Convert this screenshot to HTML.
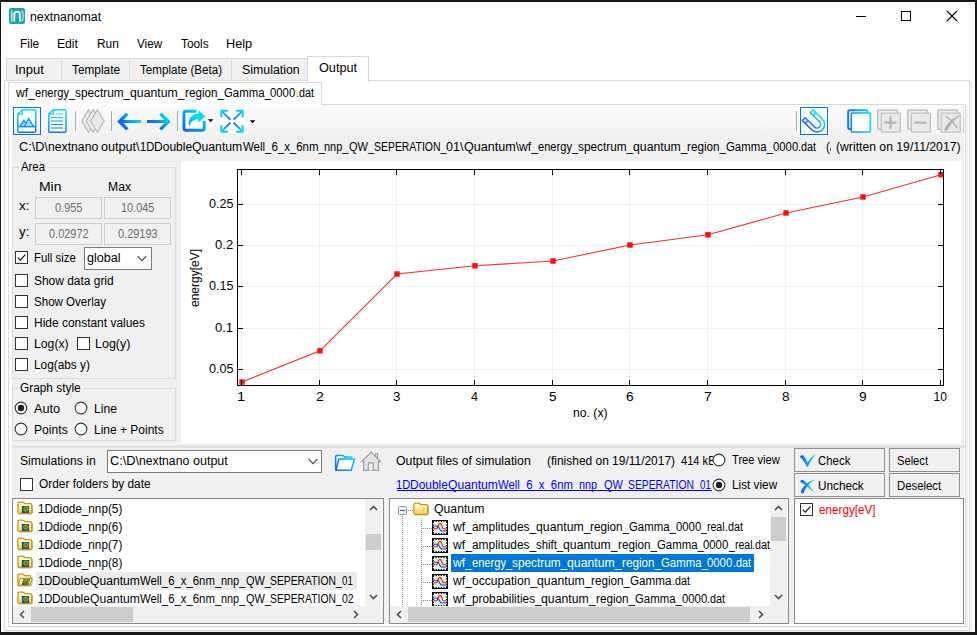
<!DOCTYPE html>
<html><head><meta charset="utf-8"><title>nextnanomat</title>
<style>
html,body{margin:0;padding:0;}
body{width:977px;height:635px;background:#191919;position:relative;overflow:hidden;font-family:"Liberation Sans",sans-serif;}
div,svg,span.t{position:absolute;}
svg{overflow:visible;}
span.t{white-space:pre;transform-origin:0 50%;display:block;}
span.t i{font-style:normal;color:transparent;}
span.t b{font-weight:normal;display:inline-block;transform-origin:0 50%;white-space:pre;}
</style></head><body>
<div style="left:1px;top:2px;width:974px;height:630px;background:#fff;"></div>
<svg style="left:9px;top:8px;" width="16" height="16" viewBox="0 0 16 16"><rect x="0" y="0" width="16" height="16" rx="2.2" fill="#17a5b0"/>
<path d="M2.7 2.4V13.6" stroke="#c8ecef" stroke-width="1.5" fill="none"/>
<path d="M5.3 13.6V6.6C5.3 4.4 6.6 3.6 8 3.6C9.6 3.6 10.9 4.4 10.9 6.8V13.6" stroke="#fff" stroke-width="1.9" fill="none"/>
<path d="M13 2.6C14.4 5.5 14.4 10.5 13 13.4" stroke="#c8ecef" stroke-width="1.4" fill="none"/></svg>
<span class="t " style="left:29.80px;top:8.84px;font-size:12px;line-height:16px;color:#000;transform:scaleX(1.0245);">nextnanomat</span>
<svg style="left:850px;top:5px;" width="115" height="22" viewBox="0 0 115 22"><path d="M6 11.5H16" stroke="#000" stroke-width="1"/>
<rect x="51.5" y="6.5" width="9" height="9" fill="none" stroke="#000" stroke-width="1"/>
<path d="M97 6L107 16M107 6L97 16" stroke="#000" stroke-width="1.1"/></svg>
<span class="t " style="left:20.44px;top:35.84px;font-size:12px;line-height:16px;color:#000;transform:scaleX(0.9955);">File</span>
<span class="t " style="left:57.43px;top:35.84px;font-size:12px;line-height:16px;color:#000;transform:scaleX(1.0092);">Edit</span>
<span class="t " style="left:96.65px;top:35.84px;font-size:12px;line-height:16px;color:#000;transform:scaleX(0.9931);">Run</span>
<span class="t " style="left:137.14px;top:35.84px;font-size:12px;line-height:16px;color:#000;transform:scaleX(0.9713);">View</span>
<span class="t " style="left:180.76px;top:35.84px;font-size:12px;line-height:16px;color:#000;transform:scaleX(0.9868);">Tools</span>
<span class="t " style="left:226.38px;top:35.84px;font-size:12px;line-height:16px;color:#000;transform:scaleX(1.0594);">Help</span>
<div style="left:4px;top:80px;width:966px;height:551px;background:#fff;border:1px solid #d9d9d9;box-sizing:border-box;"></div>
<div style="left:970px;top:81px;width:2px;height:551px;background:#f1f1f1;"></div>
<div style="left:5px;top:631px;width:967px;height:1px;background:#f1f1f1;"></div>
<div style="left:6px;top:58px;width:56px;height:23px;background:#f0f0f0;border:1px solid #d9d9d9;box-sizing:border-box;"></div>
<span class="t " style="left:15.23px;top:61.84px;font-size:12px;line-height:16px;color:#000;transform:scaleX(1.0824);">Input</span>
<div style="left:61px;top:58px;width:69px;height:23px;background:#f0f0f0;border:1px solid #d9d9d9;box-sizing:border-box;"></div>
<span class="t " style="left:72.46px;top:61.84px;font-size:12px;line-height:16px;color:#000;transform:scaleX(0.9866);">Template</span>
<div style="left:129px;top:58px;width:103px;height:23px;background:#f0f0f0;border:1px solid #d9d9d9;box-sizing:border-box;"></div>
<span class="t " style="left:140.47px;top:61.84px;font-size:12px;line-height:16px;color:#000;transform:scaleX(0.9689);">Template (Beta)</span>
<div style="left:231px;top:58px;width:77px;height:23px;background:#f0f0f0;border:1px solid #d9d9d9;box-sizing:border-box;"></div>
<span class="t " style="left:241.64px;top:61.84px;font-size:12px;line-height:16px;color:#000;transform:scaleX(1.0296);">Simulation</span>
<div style="left:307px;top:56px;width:62px;height:26px;background:#fff;border:1px solid #d9d9d9;box-sizing:border-box;border-bottom:none;"></div>
<span class="t " style="left:319.03px;top:59.84px;font-size:12px;line-height:16px;color:#000;transform:scaleX(1.0565);">Output</span>
<div style="left:8px;top:104px;width:958px;height:523px;background:#fff;border:1px solid #d9d9d9;box-sizing:border-box;"></div>
<div style="left:966px;top:105px;width:2px;height:523px;background:#f1f1f1;"></div>
<div style="left:9px;top:627px;width:959px;height:1px;background:#f1f1f1;"></div>
<div style="left:8px;top:82px;width:314px;height:24px;background:#fff;border:1px solid #d9d9d9;box-sizing:border-box;border-bottom:none;"></div>
<span class="t" style="left:16.00px;top:84.84px;font-size:12px;line-height:16px;color:#000;"><b style="width:18.90px;transform:scaleX(1.0121)">wf_</b><b style="width:40.10px;transform:scaleX(0.9248)">energy_</b><b style="width:55.10px;transform:scaleX(0.9836)">spectrum_</b><b style="width:54.50px;transform:scaleX(1.0212)">quantum_</b><b style="width:39.00px;transform:scaleX(0.9743)">region_</b><b style="width:46.80px;transform:scaleX(0.9484)">Gamma_</b><b style="width:25.20px;transform:scaleX(0.9441)">0000</b><b style="width:18.00px;transform:scaleX(0.8994)">.dat</b></span>
<div style="left:12px;top:105px;width:952px;height:519px;background:#f0f0f0;"></div>
<div style="left:12px;top:105px;width:952px;height:33px;background:linear-gradient(#fdfdfd,#fafafa 6%,#f6f6f6 50%,#f0f0f0);"></div>
<div style="left:13px;top:107px;width:28px;height:28px;background:#fbfaf9;border:1px solid #0078d7;box-sizing:border-box;"></div>
<div style="left:800px;top:107px;width:28px;height:28px;background:#fbfaf9;border:1px solid #0078d7;box-sizing:border-box;"></div>
<div style="left:75px;top:111px;width:1px;height:20px;background:#a9a9a9;"></div>
<div style="left:76px;top:111px;width:1px;height:20px;background:#fbfbfb;"></div>
<div style="left:111px;top:111px;width:1px;height:20px;background:#a9a9a9;"></div>
<div style="left:112px;top:111px;width:1px;height:20px;background:#fbfbfb;"></div>
<div style="left:177px;top:111px;width:1px;height:20px;background:#a9a9a9;"></div>
<div style="left:178px;top:111px;width:1px;height:20px;background:#fbfbfb;"></div>
<div style="left:796px;top:111px;width:1px;height:20px;background:#a9a9a9;"></div>
<div style="left:797px;top:111px;width:1px;height:20px;background:#fbfbfb;"></div>
<svg style="left:12px;top:105px;" width="953" height="33" viewBox="0 0 953 33"><defs><linearGradient id="gv" gradientUnits="userSpaceOnUse" x1="0" y1="109" x2="0" y2="133"><stop offset="0" stop-color="#00e4f6"/><stop offset="1" stop-color="#0a6cff"/></linearGradient>
<linearGradient id="gd" x1="0" y1="1" x2="1" y2="0"><stop offset="0" stop-color="#0a5cff"/><stop offset="1" stop-color="#00e0f2"/></linearGradient>
<linearGradient id="gh" x1="0" y1="0" x2="1" y2="0"><stop offset="0" stop-color="#1a78ff"/><stop offset="1" stop-color="#00e4f6"/></linearGradient>
<radialGradient id="gr" cx="0.5" cy="0.5" r="0.7"><stop offset="0" stop-color="#0a6cff"/><stop offset="0.55" stop-color="#1a9cf8"/><stop offset="1" stop-color="#00e0f2"/></radialGradient>
</defs>
<g fill="none" stroke="url(#gv)" stroke-width="1.4" stroke-linejoin="round" transform="translate(-12,-105)">
  <!-- image file icon -->
  <path d="M22.2 109.8H34.6Q35.8 109.8 35.8 111V131Q35.8 132.2 34.6 132.2H19Q17.8 132.2 17.8 131V114.2Z" fill="#fff"/>
  <path d="M22.2 109.8V114.2H17.8" stroke-width="1.2"/>
  <path d="M18.2 126.6H35.4" stroke-width="1.6"/>
  <path d="M20 126.4L23.9 120.6L26.4 124.2M24.4 126.4L28.7 118.8L33.4 126.4" stroke-width="1.7" stroke-linejoin="miter"/>
  <path d="M23.9 123.2L22.6 125.4M28.8 122.4L27.2 125.4M28.8 122.4L30.4 125.4" stroke-width="0.9" opacity="0.8"/>
  <!-- text file icon -->
  <path d="M53.2 109.8H64.8Q66 109.8 66 111V131Q66 132.2 64.8 132.2H50Q48.8 132.2 48.8 131V114.2Z" fill="#fff"/>
  <path d="M53.2 109.8V114.2H48.8" stroke-width="1.2"/>
  <path d="M56 114H63" stroke-width="1.6" opacity="0.55"/>
  <path d="M51 117.6H63" stroke-width="1"/>
  <path d="M51 121H63" stroke-width="1.8" opacity="0.6"/>
  <path d="M51 124.5H63" stroke-width="1"/>
  <path d="M51 128H63" stroke-width="1.8" opacity="0.6"/>
</g>
<g transform="translate(-12,-105)" stroke="#b2b2b2" stroke-width="1.1" fill="#e9e9e9" stroke-linejoin="miter">
  <path d="M88.5 109.8L95.3 121L88.5 132.3L81.8 121Z" fill="#ececec"/>
  <path d="M93 109.8L99.8 121L93 132.3L86.2 121Z" fill="#ececec"/>
  <path d="M97.4 109.8L104.2 121L97.4 132.3L90.6 121Z"/>
</g>
<g transform="translate(-12,-105)" fill="none" stroke-width="3.2" stroke-linecap="butt" stroke-linejoin="miter">
  <path d="M141 121.5H119.5M127.4 113.6L119.4 121.5L127.4 129.4" stroke="url(#ga1)"/>
  <path d="M147 121.5H168.5M160.4 113.6L168.4 121.5L160.4 129.4" stroke="url(#ga2)"/>
</g>
<defs>
<linearGradient id="ga1" gradientUnits="userSpaceOnUse" x1="118" y1="129" x2="139" y2="113"><stop offset="0" stop-color="#0a48ff"/><stop offset="0.35" stop-color="#0a78fc"/><stop offset="0.7" stop-color="#00c4f4"/><stop offset="1" stop-color="#00e6f4"/></linearGradient>
<linearGradient id="ga2" gradientUnits="userSpaceOnUse" x1="150" y1="132" x2="168" y2="112"><stop offset="0" stop-color="#0a48ff"/><stop offset="0.4" stop-color="#0a78fc"/><stop offset="0.75" stop-color="#00c4f4"/><stop offset="1" stop-color="#00e6f4"/></linearGradient>
<linearGradient id="ge" gradientUnits="userSpaceOnUse" x1="184" y1="132" x2="200" y2="110"><stop offset="0" stop-color="#0a5cff"/><stop offset="1" stop-color="#00dcf2"/></linearGradient>
<linearGradient id="gsw" gradientUnits="userSpaceOnUse" x1="188" y1="128" x2="204" y2="112"><stop offset="0" stop-color="#1a78ff"/><stop offset="0.5" stop-color="#00d8f0"/><stop offset="1" stop-color="#00e6f4"/></linearGradient>
<radialGradient id="gfs" gradientUnits="userSpaceOnUse" cx="232" cy="121" r="15"><stop offset="0" stop-color="#0a6cff"/><stop offset="0.6" stop-color="#1aa4f6"/><stop offset="1" stop-color="#00dcf2"/></radialGradient>
<linearGradient id="gm" gradientUnits="userSpaceOnUse" x1="804" y1="132" x2="826" y2="110"><stop offset="0" stop-color="#0a50ff"/><stop offset="1" stop-color="#00e6f4"/></linearGradient>
<linearGradient id="gc" gradientUnits="userSpaceOnUse" x1="847" y1="0" x2="871" y2="0"><stop offset="0" stop-color="#1a70ff"/><stop offset="1" stop-color="#00e6f4"/></linearGradient>
</defs>
<g transform="translate(-12,-105)">
  <!-- export -->
  <rect x="185" y="112.3" width="18.2" height="17" fill="#fdfdfd"/>
  <path d="M196.5 111.3H186Q184 111.3 184 113.3V128.3Q184 130.3 186 130.3H202.2Q204.2 130.3 204.2 128.3V121" fill="none" stroke="url(#ge)" stroke-width="2.9"/>
  <path d="M198.4 110.2L205.4 116.4L198.4 122.6V119.6C193.5 119.4 190.3 121.6 189.2 127C187.2 119.5 191.5 113.6 198.4 113.4Z" fill="url(#gsw)"/>
  <path d="M207.8 119.3H213.4L210.6 122.3Z" fill="#000"/>
  <!-- fullscreen -->
  <rect x="220" y="109.5" width="24" height="23.3" fill="#fff"/>
  <g fill="none" stroke="url(#gfs)" stroke-width="1.9">
    <path d="M221.3 117.2V110.7H227.8M236.2 110.7H242.7V117.2M242.7 125.2V131.7H236.2M227.8 131.7H221.3V125.2"/>
    <path d="M221.6 111L230.4 119.6M242.4 111L233.6 119.6M242.4 131.4L233.6 122.8M221.6 131.4L230.4 122.8"/>
  </g>
  <path d="M249.8 120.3H255.4L252.6 123.3Z" fill="#000"/>
  <!-- magnet -->
  <g transform="translate(817,124.4) rotate(-45)" fill="none" stroke="url(#gmL)" stroke-width="1.4" stroke-linejoin="round">
    <path d="M-7.6 -13V0A7.6 7.6 0 0 0 7.6 0V-13H3.6V0A3.6 3.6 0 0 1 -3.6 0V-13Z"/>
    <path d="M-7.6 -9.2H-3.6M3.6 -9.2H7.6"/>
  </g>
  <!-- copy -->
  <rect x="848.2" y="110.2" width="19" height="18.8" rx="1" fill="none" stroke="url(#gc)" stroke-width="2"/>
  <rect x="851.3" y="113" width="19" height="19" rx="0.8" fill="#fff" stroke="url(#gc)" stroke-width="1.6"/>
</g>
<defs><linearGradient id="gmL" gradientUnits="userSpaceOnUse" x1="-8" y1="0" x2="8" y2="0"><stop offset="0" stop-color="#0a58ff"/><stop offset="1" stop-color="#00e0f4"/></linearGradient></defs>
<g transform="translate(-12,-105)" stroke="#c2c2c2" stroke-width="1.3" fill="#ececec">
  <rect x="877.7" y="110" width="19.5" height="19.3" rx="0.8" stroke-width="1.6"/>
  <rect x="881.3" y="113.2" width="19" height="19" rx="0.8" fill="#e9e9e9"/>
  <rect x="907.9" y="110" width="19.5" height="19.3" rx="0.8" stroke-width="1.6"/>
  <rect x="911.3" y="113.2" width="19" height="19" rx="0.8" fill="#e9e9e9"/>
  <rect x="937.8" y="110" width="19.5" height="19.3" rx="0.8" stroke-width="1.6"/>
  <rect x="941.2" y="113.2" width="19" height="19" rx="0.8" fill="#e9e9e9"/>
  <path d="M884.4 122.6H896.6M890.5 116.5V128.7" stroke="#b6b6b6" stroke-width="2.2" fill="none"/>
  <path d="M914.5 122.6H926.6" stroke="#b6b6b6" stroke-width="2.2" fill="none"/>
  <path d="M945.8 116.4C950 118.6 954 123 957.4 128.4" stroke="#b4b4b4" stroke-width="1.6" fill="none"/>
  <path d="M959.4 115.8C952 119.2 947 123.6 944.8 129.4C944.6 130.6 946.8 130.8 947.4 129.6C949.6 124.6 953.2 120 959.4 115.8Z" fill="#b0b0b0" stroke="#b0b0b0" stroke-width="1"/>
</g>
</svg>
<div style="left:963px;top:107px;width:1px;height:26px;background:linear-gradient(#e6e6e6,#d0d0d0 40%,#c2c2c2);"></div>
<div style="left:961px;top:106px;width:3px;height:1px;background:#e4e4e4;"></div>
<span class="t" style="left:18.97px;top:138.84px;font-size:12px;line-height:16px;color:#000;"><b style="width:28.80px;transform:scaleX(1.0536)">C:\D\</b><b style="width:53.60px;transform:scaleX(1.0170)">nextnano </b><b style="width:38.50px;transform:scaleX(1.0492)">output\</b><b style="width:14.31px;transform:scaleX(0.9331)">1D</b><b style="width:38.20px;transform:scaleX(1.0047)">Double</b><b style="width:50.30px;transform:scaleX(1.0191)">Quantum</b><b style="width:81.85px;transform:scaleX(0.9537)">Well_6_x_6nm_</b><b style="width:24.39px;transform:scaleX(0.9139)">nnp_</b><b style="width:25.10px;transform:scaleX(0.9182)">QW_</b><b style="width:72.27px;transform:scaleX(0.8694)">SEPERATION_</b><b style="width:17.37px;transform:scaleX(1.0412)">01\</b><b style="width:55.20px;transform:scaleX(1.0476)">Quantum\</b><b style="width:18.90px;transform:scaleX(1.0121)">wf_</b><b style="width:40.10px;transform:scaleX(0.9248)">energy_</b><b style="width:55.10px;transform:scaleX(0.9836)">spectrum_</b><b style="width:54.50px;transform:scaleX(1.0212)">quantum_</b><b style="width:39.00px;transform:scaleX(0.9743)">region_</b><b style="width:46.80px;transform:scaleX(0.9484)">Gamma_</b><b style="width:25.20px;transform:scaleX(0.9441)">0000</b><b style="width:18.00px;transform:scaleX(0.8994)">.dat</b></span>
<span class="t " style="left:825.82px;top:138.84px;font-size:12px;line-height:16px;color:#000;transform:scaleX(0.9434);">(</span>
<div style="left:830px;top:148px;width:1px;height:3px;background:#666;"></div>
<span class="t " style="left:836.27px;top:138.84px;font-size:12px;line-height:16px;color:#000;transform:scaleX(1.0164);">(written on 19/11/2017)</span>
<div style="left:12px;top:167px;width:164px;height:212px;border:1px solid #dcdcdc;box-sizing:border-box;"></div>
<div style="left:19px;top:166px;width:28px;height:3px;background:#f0f0f0;"></div>
<span class="t " style="left:21.00px;top:158.84px;font-size:12px;line-height:16px;color:#000;transform:scaleX(0.9479);">Area</span>
<span class="t " style="left:38.58px;top:178.84px;font-size:12px;line-height:16px;color:#000;transform:scaleX(1.1621);">Min</span>
<span class="t " style="left:107.73px;top:178.84px;font-size:12px;line-height:16px;color:#000;transform:scaleX(1.0139);">Max</span>
<span class="t " style="left:18.66px;top:197.84px;font-size:12px;line-height:16px;color:#000;transform:scaleX(1.1275);">x:</span>
<span class="t " style="left:18.80px;top:223.84px;font-size:12px;line-height:16px;color:#000;transform:scaleX(1.1111);">y:</span>
<div style="left:35px;top:197px;width:67px;height:22px;background:#f0f0f0;border:1px solid #cfcfcf;box-sizing:border-box;"></div>
<span class="t " style="left:55.06px;top:199.84px;font-size:12px;line-height:16px;color:#6d6d6d;transform:scaleX(0.9125);">0.955</span>
<div style="left:104px;top:197px;width:67px;height:22px;background:#f0f0f0;border:1px solid #cfcfcf;box-sizing:border-box;"></div>
<span class="t " style="left:121.18px;top:199.84px;font-size:12px;line-height:16px;color:#6d6d6d;transform:scaleX(0.9111);">10.045</span>
<div style="left:35px;top:223px;width:67px;height:22px;background:#f0f0f0;border:1px solid #cfcfcf;box-sizing:border-box;"></div>
<span class="t " style="left:48.86px;top:225.84px;font-size:12px;line-height:16px;color:#6d6d6d;transform:scaleX(0.9149);">0.02972</span>
<div style="left:104px;top:223px;width:67px;height:22px;background:#f0f0f0;border:1px solid #cfcfcf;box-sizing:border-box;"></div>
<span class="t " style="left:117.76px;top:225.84px;font-size:12px;line-height:16px;color:#6d6d6d;transform:scaleX(0.9147);">0.29193</span>
<div style="left:15px;top:251px;width:13px;height:13px;background:#fff;border:1px solid #333;box-sizing:border-box;"></div>
<svg style="left:15px;top:251px;" width="13" height="13" viewBox="0 0 13 13"><path d="M2.8 6.6L5.3 9.2L10.3 3.6" fill="none" stroke="#111" stroke-width="1.15"/></svg>
<span class="t " style="left:33.69px;top:249.84px;font-size:12px;line-height:16px;color:#000;transform:scaleX(0.9497);">Full size</span>
<div style="left:84px;top:247px;width:68px;height:23px;background:#fff;border:1px solid #7a7a7a;box-sizing:border-box;"></div>
<span class="t " style="left:87.00px;top:249.84px;font-size:12px;line-height:16px;color:#000;transform:scaleX(1.0514);">global</span>
<svg style="left:136px;top:255px;" width="12" height="8" viewBox="0 0 12 8"><path d="M1.7 1.2L6 5.7L10.3 1.2" fill="none" stroke="#444" stroke-width="1.1"/></svg>
<div style="left:15px;top:274px;width:13px;height:13px;background:#fff;border:1px solid #333;box-sizing:border-box;"></div>
<span class="t " style="left:34.06px;top:272.84px;font-size:12px;line-height:16px;color:#000;transform:scaleX(0.9952);">Show data grid</span>
<div style="left:15px;top:295px;width:13px;height:13px;background:#fff;border:1px solid #333;box-sizing:border-box;"></div>
<span class="t " style="left:34.08px;top:293.84px;font-size:12px;line-height:16px;color:#000;transform:scaleX(0.9628);">Show Overlay</span>
<div style="left:15px;top:316px;width:13px;height:13px;background:#fff;border:1px solid #333;box-sizing:border-box;"></div>
<span class="t " style="left:33.64px;top:314.84px;font-size:12px;line-height:16px;color:#000;transform:scaleX(0.9960);">Hide constant values</span>
<div style="left:15px;top:337px;width:13px;height:13px;background:#fff;border:1px solid #333;box-sizing:border-box;"></div>
<span class="t " style="left:33.62px;top:335.84px;font-size:12px;line-height:16px;color:#000;transform:scaleX(1.0192);">Log(x)</span>
<div style="left:77px;top:337px;width:13px;height:13px;background:#fff;border:1px solid #333;box-sizing:border-box;"></div>
<span class="t " style="left:95.40px;top:335.84px;font-size:12px;line-height:16px;color:#000;transform:scaleX(1.0409);">Log(y)</span>
<div style="left:15px;top:358px;width:13px;height:13px;background:#fff;border:1px solid #333;box-sizing:border-box;"></div>
<span class="t " style="left:33.65px;top:356.84px;font-size:12px;line-height:16px;color:#000;transform:scaleX(0.9862);">Log(abs y)</span>
<div style="left:12px;top:388px;width:164px;height:53px;border:1px solid #dcdcdc;box-sizing:border-box;"></div>
<div style="left:19px;top:387px;width:64px;height:3px;background:#f0f0f0;"></div>
<span class="t " style="left:20.41px;top:379.84px;font-size:12px;line-height:16px;color:#000;transform:scaleX(0.9877);">Graph style</span>
<svg style="left:14.0px;top:401.1px;" width="14" height="14" viewBox="0 0 14 14"><circle cx="7" cy="7" r="5.85" fill="#fff" stroke="#333" stroke-width="1.1"/><circle cx="7" cy="7" r="3.2" fill="#222"/></svg>
<span class="t " style="left:34.40px;top:400.84px;font-size:12px;line-height:16px;color:#000;transform:scaleX(1.0587);">Auto</span>
<svg style="left:74.0px;top:401.1px;" width="14" height="14" viewBox="0 0 14 14"><circle cx="7" cy="7" r="5.85" fill="#fff" stroke="#333" stroke-width="1.1"/></svg>
<span class="t " style="left:93.73px;top:400.84px;font-size:12px;line-height:16px;color:#000;transform:scaleX(1.0122);">Line</span>
<svg style="left:14.0px;top:422.1px;" width="14" height="14" viewBox="0 0 14 14"><circle cx="7" cy="7" r="5.85" fill="#fff" stroke="#333" stroke-width="1.1"/></svg>
<span class="t " style="left:33.73px;top:421.84px;font-size:12px;line-height:16px;color:#000;transform:scaleX(1.0100);">Points</span>
<svg style="left:74.0px;top:422.1px;" width="14" height="14" viewBox="0 0 14 14"><circle cx="7" cy="7" r="5.85" fill="#fff" stroke="#333" stroke-width="1.1"/></svg>
<span class="t " style="left:93.74px;top:421.84px;font-size:12px;line-height:16px;color:#000;transform:scaleX(0.9994);">Line + Points</span>
<div style="left:181px;top:161px;width:780px;height:282px;background:#fff;"></div>
<svg style="left:181px;top:161px;" width="780" height="282" viewBox="0 0 780 282"><path d="M60.5 9V224" stroke="#e9f3fc" stroke-width="1"/><path d="M138.5 9V224" stroke="#e9f3fc" stroke-width="1"/><path d="M215.5 9V224" stroke="#e9f3fc" stroke-width="1"/><path d="M293.5 9V224" stroke="#e9f3fc" stroke-width="1"/><path d="M371.5 9V224" stroke="#e9f3fc" stroke-width="1"/><path d="M448.5 9V224" stroke="#e9f3fc" stroke-width="1"/><path d="M526.5 9V224" stroke="#e9f3fc" stroke-width="1"/><path d="M604.5 9V224" stroke="#e9f3fc" stroke-width="1"/><path d="M681.5 9V224" stroke="#e9f3fc" stroke-width="1"/><path d="M759.5 9V224" stroke="#e9f3fc" stroke-width="1"/><path d="M57 43.5H762" stroke="#e9f3fc" stroke-width="1"/><path d="M57 84.5H762" stroke="#e9f3fc" stroke-width="1"/><path d="M57 125.5H762" stroke="#e9f3fc" stroke-width="1"/><path d="M57 167.5H762" stroke="#e9f3fc" stroke-width="1"/><path d="M57 208.5H762" stroke="#e9f3fc" stroke-width="1"/><polyline points="61.0,221.0 139.0,189.8 216.0,113.0 294.0,104.8 372.0,100.0 449.0,84.0 527.0,73.8 605.0,52.0 682.0,36.0 760.0,13.7" fill="none" stroke="#ff2a2a" stroke-width="1.1"/><rect x="58.3" y="218.3" width="5.4" height="5.4" fill="#ff0d0d"/><rect x="136.3" y="187.1" width="5.4" height="5.4" fill="#ff0d0d"/><rect x="213.3" y="110.3" width="5.4" height="5.4" fill="#ff0d0d"/><rect x="291.3" y="102.1" width="5.4" height="5.4" fill="#ff0d0d"/><rect x="369.3" y="97.3" width="5.4" height="5.4" fill="#ff0d0d"/><rect x="446.3" y="81.3" width="5.4" height="5.4" fill="#ff0d0d"/><rect x="524.3" y="71.1" width="5.4" height="5.4" fill="#ff0d0d"/><rect x="602.3" y="49.3" width="5.4" height="5.4" fill="#ff0d0d"/><rect x="679.3" y="33.3" width="5.4" height="5.4" fill="#ff0d0d"/><rect x="757.3" y="11.0" width="5.4" height="5.4" fill="#ff0d0d"/><rect x="56.5" y="8.5" width="706" height="216" fill="none" stroke="#000" stroke-width="1"/><path d="M60.5 9V14M60.5 224V219" stroke="#000" stroke-width="1"/><path d="M138.5 9V14M138.5 224V219" stroke="#000" stroke-width="1"/><path d="M215.5 9V14M215.5 224V219" stroke="#000" stroke-width="1"/><path d="M293.5 9V14M293.5 224V219" stroke="#000" stroke-width="1"/><path d="M371.5 9V14M371.5 224V219" stroke="#000" stroke-width="1"/><path d="M448.5 9V14M448.5 224V219" stroke="#000" stroke-width="1"/><path d="M526.5 9V14M526.5 224V219" stroke="#000" stroke-width="1"/><path d="M604.5 9V14M604.5 224V219" stroke="#000" stroke-width="1"/><path d="M681.5 9V14M681.5 224V219" stroke="#000" stroke-width="1"/><path d="M759.5 9V14M759.5 224V219" stroke="#000" stroke-width="1"/><path d="M57 43.5H62M762 43.5H757" stroke="#000" stroke-width="1"/><path d="M57 84.5H62M762 84.5H757" stroke="#000" stroke-width="1"/><path d="M57 125.5H62M762 125.5H757" stroke="#000" stroke-width="1"/><path d="M57 167.5H62M762 167.5H757" stroke="#000" stroke-width="1"/><path d="M57 208.5H62M762 208.5H757" stroke="#000" stroke-width="1"/></svg>
<span class="t " style="left:208.50px;top:196.44px;font-size:12px;line-height:16px;color:#000;transform:scaleX(1.0500);">0.25</span>
<span class="t " style="left:214.98px;top:237.44px;font-size:12px;line-height:16px;color:#000;transform:scaleX(1.0897);">0.2</span>
<span class="t " style="left:208.50px;top:278.44px;font-size:12px;line-height:16px;color:#000;transform:scaleX(1.0500);">0.15</span>
<span class="t " style="left:214.98px;top:320.44px;font-size:12px;line-height:16px;color:#000;transform:scaleX(1.0856);">0.1</span>
<span class="t " style="left:208.50px;top:361.44px;font-size:12px;line-height:16px;color:#000;transform:scaleX(1.0500);">0.05</span>
<span class="t " style="left:237.20px;top:388.84px;font-size:12px;line-height:16px;color:#000;transform:scaleX(1.2261);">1</span>
<span class="t " style="left:315.60px;top:388.84px;font-size:12px;line-height:16px;color:#000;transform:scaleX(1.1722);">2</span>
<span class="t " style="left:392.83px;top:388.84px;font-size:12px;line-height:16px;color:#000;transform:scaleX(1.1111);">3</span>
<span class="t " style="left:471.05px;top:388.84px;font-size:12px;line-height:16px;color:#000;transform:scaleX(1.0458);">4</span>
<span class="t " style="left:548.76px;top:388.84px;font-size:12px;line-height:16px;color:#000;transform:scaleX(1.1228);">5</span>
<span class="t " style="left:625.61px;top:388.84px;font-size:12px;line-height:16px;color:#000;transform:scaleX(1.1470);">6</span>
<span class="t " style="left:703.60px;top:388.84px;font-size:12px;line-height:16px;color:#000;transform:scaleX(1.1722);">7</span>
<span class="t " style="left:781.76px;top:388.84px;font-size:12px;line-height:16px;color:#000;transform:scaleX(1.1228);">8</span>
<span class="t " style="left:858.68px;top:388.84px;font-size:12px;line-height:16px;color:#000;transform:scaleX(1.1470);">9</span>
<span class="t " style="left:933.60px;top:388.84px;font-size:12px;line-height:16px;color:#000;transform:scaleX(1.0000);">10</span>
<span class="t " style="left:572.61px;top:404.84px;font-size:12px;line-height:16px;color:#000;transform:scaleX(1.0166);">no. (x)</span>
<span class="t" style="left:195px;top:278px;font-size:12px;line-height:16px;transform:translate(-50%,-50%) rotate(-90deg) scaleX(0.9994);transform-origin:50% 50%;">energy[eV]</span>
<div style="left:12px;top:443px;width:953px;height:2px;background:#f5f5f5;"></div>
<div style="left:12px;top:445px;width:953px;height:3px;background:#e4e4e4;"></div>
<span class="t " style="left:19.55px;top:452.84px;font-size:12px;line-height:16px;color:#000;transform:scaleX(1.0131);">Simulations in</span>
<div style="left:107px;top:450px;width:215px;height:23px;background:#fff;border:1px solid #7a7a7a;box-sizing:border-box;"></div>
<svg style="left:307px;top:458px;" width="12" height="8" viewBox="0 0 12 8"><path d="M1.7 1.2L6 5.7L10.3 1.2" fill="none" stroke="#444" stroke-width="1.1"/></svg>
<span class="t" style="left:109.96px;top:452.84px;font-size:12px;line-height:16px;color:#000;"><b style="width:29.10px;transform:scaleX(1.0646)">C:\D\</b><b style="width:53.60px;transform:scaleX(1.0170)">nextnano </b><b style="width:34.76px;transform:scaleX(1.0420)">output</b></span>
<svg style="left:330px;top:448px;" width="56" height="26" viewBox="330 448 56 26"><defs><linearGradient id="gf" gradientUnits="userSpaceOnUse" x1="335" y1="470" x2="355" y2="456"><stop offset="0" stop-color="#0a60ff"/><stop offset="0.5" stop-color="#0a98f8"/><stop offset="1" stop-color="#00e6f4"/></linearGradient></defs>
<path d="M335.7 470V456.4Q335.7 455.5 336.6 455.5H342.8Q343.5 455.5 343.9 456.1L344.5 457.1H350.8Q351.8 457.1 351.8 458.1V459" fill="#fcfcfc" stroke="url(#gf)" stroke-width="1.5" stroke-linejoin="round"/>
<path d="M335.9 470.2L338.9 459H354.6L351.2 470.2Z" fill="#fff" stroke="url(#gf)" stroke-width="1.5" stroke-linejoin="round"/>
<path d="M375.6 456V453.5H377.6V458.2" fill="#e2e2e2" stroke="#a0a0a0" stroke-width="1.1"/>
<path d="M361.8 461.7L371.1 452.2L380.5 461.7H378.5V470.4H363.7V461.7Z" fill="#e5e5e5" stroke="#9c9c9c" stroke-width="1.2" stroke-linejoin="miter"/>
<path d="M368.3 470.4V462.9H373.3V470.4" fill="#ededed" stroke="#9c9c9c" stroke-width="1.2"/></svg>
<div style="left:20px;top:478px;width:13px;height:13px;background:#fff;border:1px solid #333;box-sizing:border-box;"></div>
<span class="t " style="left:38.87px;top:475.84px;font-size:12px;line-height:16px;color:#000;transform:scaleX(0.9900);">Order folders by date</span>
<div style="left:12px;top:498px;width:372px;height:126px;background:#fff;border:1px solid #828790;box-sizing:border-box;"></div>
<div style="left:36px;top:572px;width:321px;height:18px;background:#ebebeb;"></div>
<svg style="left:17px;top:500.4px;" width="16" height="16" viewBox="0 0 16 16"><defs><linearGradient id="fy" x1="0" y1="0" x2="0" y2="1"><stop offset="0" stop-color="#fffad8"/><stop offset="1" stop-color="#fbd860"/></linearGradient>
<radialGradient id="fr" cx="0.55" cy="0.45" r="0.8"><stop offset="0" stop-color="#ff1400"/><stop offset="0.16" stop-color="#e83800"/><stop offset="0.3" stop-color="#a0a000"/><stop offset="0.44" stop-color="#10a030"/><stop offset="0.64" stop-color="#0840c8"/><stop offset="1" stop-color="#0010a0"/></radialGradient></defs>
<path d="M2.2 14.1H13.8Q15.5 14.1 15.5 12.6V5.4" fill="none" stroke="#7a6030" stroke-width="1" opacity="0.45"/>
<path d="M0.9 3.5Q0.9 2 2.3 2H5.5Q6.5 2 7.1 2.8L7.7 3.7H13.3Q14.7 3.7 14.7 5.1V12.2Q14.7 13.4 13.5 13.4H2.1Q0.9 13.4 0.9 12.2Z" fill="url(#fy)" stroke="#cc9510" stroke-width="1.25"/>
<path d="M2 5.3H13.6" stroke="#fffdf0" stroke-width="1" opacity="0.9"/>
<rect x="4.9" y="6" width="7.2" height="6.9" fill="url(#fr)"/></svg>
<span class="t " style="left:38.22px;top:500.84px;font-size:12px;line-height:16px;color:#000;transform:scaleX(0.9796);">1Ddiode_nnp(5)</span>
<svg style="left:17px;top:518.4px;" width="16" height="16" viewBox="0 0 16 16"><defs><linearGradient id="fy" x1="0" y1="0" x2="0" y2="1"><stop offset="0" stop-color="#fffad8"/><stop offset="1" stop-color="#fbd860"/></linearGradient>
<radialGradient id="fr" cx="0.55" cy="0.45" r="0.8"><stop offset="0" stop-color="#ff1400"/><stop offset="0.16" stop-color="#e83800"/><stop offset="0.3" stop-color="#a0a000"/><stop offset="0.44" stop-color="#10a030"/><stop offset="0.64" stop-color="#0840c8"/><stop offset="1" stop-color="#0010a0"/></radialGradient></defs>
<path d="M2.2 14.1H13.8Q15.5 14.1 15.5 12.6V5.4" fill="none" stroke="#7a6030" stroke-width="1" opacity="0.45"/>
<path d="M0.9 3.5Q0.9 2 2.3 2H5.5Q6.5 2 7.1 2.8L7.7 3.7H13.3Q14.7 3.7 14.7 5.1V12.2Q14.7 13.4 13.5 13.4H2.1Q0.9 13.4 0.9 12.2Z" fill="url(#fy)" stroke="#cc9510" stroke-width="1.25"/>
<path d="M2 5.3H13.6" stroke="#fffdf0" stroke-width="1" opacity="0.9"/>
<rect x="4.9" y="6" width="7.2" height="6.9" fill="url(#fr)"/></svg>
<span class="t " style="left:38.22px;top:518.84px;font-size:12px;line-height:16px;color:#000;transform:scaleX(0.9796);">1Ddiode_nnp(6)</span>
<svg style="left:17px;top:536.4px;" width="16" height="16" viewBox="0 0 16 16"><defs><linearGradient id="fy" x1="0" y1="0" x2="0" y2="1"><stop offset="0" stop-color="#fffad8"/><stop offset="1" stop-color="#fbd860"/></linearGradient>
<radialGradient id="fr" cx="0.55" cy="0.45" r="0.8"><stop offset="0" stop-color="#ff1400"/><stop offset="0.16" stop-color="#e83800"/><stop offset="0.3" stop-color="#a0a000"/><stop offset="0.44" stop-color="#10a030"/><stop offset="0.64" stop-color="#0840c8"/><stop offset="1" stop-color="#0010a0"/></radialGradient></defs>
<path d="M2.2 14.1H13.8Q15.5 14.1 15.5 12.6V5.4" fill="none" stroke="#7a6030" stroke-width="1" opacity="0.45"/>
<path d="M0.9 3.5Q0.9 2 2.3 2H5.5Q6.5 2 7.1 2.8L7.7 3.7H13.3Q14.7 3.7 14.7 5.1V12.2Q14.7 13.4 13.5 13.4H2.1Q0.9 13.4 0.9 12.2Z" fill="url(#fy)" stroke="#cc9510" stroke-width="1.25"/>
<path d="M2 5.3H13.6" stroke="#fffdf0" stroke-width="1" opacity="0.9"/>
<rect x="4.9" y="6" width="7.2" height="6.9" fill="url(#fr)"/></svg>
<span class="t " style="left:38.22px;top:536.84px;font-size:12px;line-height:16px;color:#000;transform:scaleX(0.9796);">1Ddiode_nnp(7)</span>
<svg style="left:17px;top:554.4px;" width="16" height="16" viewBox="0 0 16 16"><defs><linearGradient id="fy" x1="0" y1="0" x2="0" y2="1"><stop offset="0" stop-color="#fffad8"/><stop offset="1" stop-color="#fbd860"/></linearGradient>
<radialGradient id="fr" cx="0.55" cy="0.45" r="0.8"><stop offset="0" stop-color="#ff1400"/><stop offset="0.16" stop-color="#e83800"/><stop offset="0.3" stop-color="#a0a000"/><stop offset="0.44" stop-color="#10a030"/><stop offset="0.64" stop-color="#0840c8"/><stop offset="1" stop-color="#0010a0"/></radialGradient></defs>
<path d="M2.2 14.1H13.8Q15.5 14.1 15.5 12.6V5.4" fill="none" stroke="#7a6030" stroke-width="1" opacity="0.45"/>
<path d="M0.9 3.5Q0.9 2 2.3 2H5.5Q6.5 2 7.1 2.8L7.7 3.7H13.3Q14.7 3.7 14.7 5.1V12.2Q14.7 13.4 13.5 13.4H2.1Q0.9 13.4 0.9 12.2Z" fill="url(#fy)" stroke="#cc9510" stroke-width="1.25"/>
<path d="M2 5.3H13.6" stroke="#fffdf0" stroke-width="1" opacity="0.9"/>
<rect x="4.9" y="6" width="7.2" height="6.9" fill="url(#fr)"/></svg>
<span class="t " style="left:38.22px;top:554.84px;font-size:12px;line-height:16px;color:#000;transform:scaleX(0.9796);">1Ddiode_nnp(8)</span>
<svg style="left:17px;top:572.4px;" width="16" height="16" viewBox="0 0 16 16"><defs><linearGradient id="fyo" x1="0" y1="0" x2="0" y2="1"><stop offset="0" stop-color="#fffad8"/><stop offset="1" stop-color="#fbd860"/></linearGradient>
<radialGradient id="fro" cx="0.55" cy="0.45" r="0.8"><stop offset="0" stop-color="#ff1400"/><stop offset="0.16" stop-color="#e83800"/><stop offset="0.3" stop-color="#a0a000"/><stop offset="0.44" stop-color="#10a030"/><stop offset="0.64" stop-color="#0840c8"/><stop offset="1" stop-color="#0010a0"/></radialGradient></defs>
<path d="M2.4 14.1H12.6L14.6 13.2L15.9 7" fill="none" stroke="#7a6030" stroke-width="1" opacity="0.4"/>
<path d="M0.9 12.8V3.5Q0.9 2 2.3 2H5.5Q6.5 2 7.1 2.8L7.7 3.7H12.4Q13.8 3.7 13.8 5.1V6.4" fill="#fff4b4" stroke="#cc9510" stroke-width="1.25"/>
<path d="M1 13.4L3.2 6.4H15.2L13.2 13.4Z" fill="url(#fyo)" stroke="#cc9510" stroke-width="1.25" stroke-linejoin="round"/>
<path d="M6.4 7.2H13L11.4 12.8H4.8Z" fill="url(#fro)"/></svg>
<span class="t" style="left:38.17px;top:572.84px;font-size:12px;line-height:16px;color:#000;"><b style="width:14.20px;transform:scaleX(0.9257)">1D</b><b style="width:37.90px;transform:scaleX(0.9967)">Double</b><b style="width:49.90px;transform:scaleX(1.0110)">Quantum</b><b style="width:81.20px;transform:scaleX(0.9461)">Well_6_x_6nm_</b><b style="width:24.20px;transform:scaleX(0.9066)">nnp_</b><b style="width:24.90px;transform:scaleX(0.9110)">QW_</b><b style="width:71.70px;transform:scaleX(0.8625)">SEPERATION_</b><b style="width:10.80px;transform:scaleX(0.8092)">01</b></span>
<svg style="left:17px;top:590.4px;" width="16" height="16" viewBox="0 0 16 16"><defs><linearGradient id="fy" x1="0" y1="0" x2="0" y2="1"><stop offset="0" stop-color="#fffad8"/><stop offset="1" stop-color="#fbd860"/></linearGradient>
<radialGradient id="fr" cx="0.55" cy="0.45" r="0.8"><stop offset="0" stop-color="#ff1400"/><stop offset="0.16" stop-color="#e83800"/><stop offset="0.3" stop-color="#a0a000"/><stop offset="0.44" stop-color="#10a030"/><stop offset="0.64" stop-color="#0840c8"/><stop offset="1" stop-color="#0010a0"/></radialGradient></defs>
<path d="M2.2 14.1H13.8Q15.5 14.1 15.5 12.6V5.4" fill="none" stroke="#7a6030" stroke-width="1" opacity="0.45"/>
<path d="M0.9 3.5Q0.9 2 2.3 2H5.5Q6.5 2 7.1 2.8L7.7 3.7H13.3Q14.7 3.7 14.7 5.1V12.2Q14.7 13.4 13.5 13.4H2.1Q0.9 13.4 0.9 12.2Z" fill="url(#fy)" stroke="#cc9510" stroke-width="1.25"/>
<path d="M2 5.3H13.6" stroke="#fffdf0" stroke-width="1" opacity="0.9"/>
<rect x="4.9" y="6" width="7.2" height="6.9" fill="url(#fr)"/></svg>
<span class="t" style="left:38.17px;top:590.84px;font-size:12px;line-height:16px;color:#000;"><b style="width:14.20px;transform:scaleX(0.9257)">1D</b><b style="width:37.90px;transform:scaleX(0.9967)">Double</b><b style="width:49.90px;transform:scaleX(1.0110)">Quantum</b><b style="width:81.20px;transform:scaleX(0.9461)">Well_6_x_6nm_</b><b style="width:24.20px;transform:scaleX(0.9066)">nnp_</b><b style="width:24.90px;transform:scaleX(0.9110)">QW_</b><b style="width:71.70px;transform:scaleX(0.8625)">SEPERATION_</b><b style="width:11.60px;transform:scaleX(0.8692)">02</b></span>
<div style="left:365px;top:499px;width:17px;height:107px;background:#f0f0f0;"></div>
<div style="left:366px;top:534px;width:15px;height:16px;background:#cdcdcd;"></div>
<svg style="left:369px;top:505px;" width="9" height="6" viewBox="0 0 9 6"><path d="M1 5L4.5 1.5L8 5" fill="none" stroke="#505050" stroke-width="1.6"/></svg>
<svg style="left:369px;top:594px;" width="9" height="6" viewBox="0 0 9 6"><path d="M1 1L4.5 4.5L8 1" fill="none" stroke="#505050" stroke-width="1.6"/></svg>
<div style="left:13px;top:606px;width:352px;height:17px;background:#f0f0f0;"></div>
<div style="left:31px;top:607px;width:102px;height:15px;background:#cdcdcd;"></div>
<svg style="left:19px;top:610px;" width="6" height="9" viewBox="0 0 6 9"><path d="M5 1L1.5 4.5L5 8" fill="none" stroke="#505050" stroke-width="1.6"/></svg>
<svg style="left:353px;top:610px;" width="6" height="9" viewBox="0 0 6 9"><path d="M1 1L4.5 4.5L1 8" fill="none" stroke="#505050" stroke-width="1.6"/></svg>
<div style="left:365px;top:606px;width:18px;height:17px;background:#f0f0f0;"></div>
<div style="left:389px;top:498px;width:400px;height:126px;background:#fff;border:1px solid #828790;box-sizing:border-box;"></div>
<span class="t " style="left:396.45px;top:452.84px;font-size:12px;line-height:16px;color:#000;transform:scaleX(1.0258);">Output files of simulation</span>
<span class="t " style="left:547.28px;top:452.84px;font-size:12px;line-height:16px;color:#000;transform:scaleX(0.9962);">(finished on 19/11/2017)</span>
<div style="left:681px;top:452px;width:32px;height:18px;overflow:hidden;position:absolute">
<span class="t " style="left:0.03px;top:0.84px;font-size:12px;line-height:16px;color:#000;transform:scaleX(0.9252);">414 kB</span>
</div>
<span class="t" style="left:396.17px;top:476.84px;font-size:12px;line-height:16px;color:#0000ff;"><b style="width:14.20px;transform:scaleX(0.9257)">1D</b><b style="width:37.90px;transform:scaleX(0.9967)">Double</b><b style="width:49.90px;transform:scaleX(1.0110)">Quantum</b><b style="width:81.20px;transform:scaleX(0.9461)">Well<i>_</i>6<i>_</i>x<i>_</i>6nm<i>_</i></b><b style="width:24.20px;transform:scaleX(0.9066)">nnp<i>_</i></b><b style="width:24.90px;transform:scaleX(0.9110)">QW<i>_</i></b><b style="width:71.70px;transform:scaleX(0.8625)">SEPERATION<i>_</i></b><b style="width:10.80px;transform:scaleX(0.8092)">01</b></span>
<div style="left:396.5px;top:490px;width:315px;height:1px;background:#0000ff;"></div>
<svg style="left:712.0px;top:452.6px;" width="14" height="14" viewBox="0 0 14 14"><circle cx="7" cy="7" r="5.85" fill="#fff" stroke="#333" stroke-width="1.1"/></svg>
<span class="t " style="left:732.18px;top:451.84px;font-size:12px;line-height:16px;color:#000;transform:scaleX(0.9268);">Tree view</span>
<svg style="left:712.0px;top:477.6px;" width="14" height="14" viewBox="0 0 14 14"><circle cx="7" cy="7" r="5.85" fill="#fff" stroke="#333" stroke-width="1.1"/><circle cx="7" cy="7" r="3.2" fill="#222"/></svg>
<span class="t " style="left:731.86px;top:476.84px;font-size:12px;line-height:16px;color:#000;transform:scaleX(0.9809);">List view</span>
<svg style="left:398px;top:506px;" width="9" height="9" viewBox="0 0 9 9"><rect x="0.5" y="0.5" width="8" height="8" rx="1" fill="#f4f4f4" stroke="#929292"/><path d="M2 4.5H7" stroke="#3c55a5" stroke-width="1.1"/></svg>
<svg style="left:390px;top:499px;" width="60" height="107" viewBox="390 499 60 107"><g stroke="#8a8a8a" stroke-width="1" stroke-dasharray="1 1" fill="none"><path d="M408 510.5H413"/><path d="M402.5 516V606"/><path d="M421.5 518V606"/><path d="M423 528.5H432"/><path d="M423 546.5H432"/><path d="M423 564.5H432"/><path d="M423 582.5H432"/><path d="M423 600.5H432"/></g></svg>
<svg style="left:413px;top:500.5px;" width="16" height="16" viewBox="0 0 16 16"><defs><linearGradient id="fy2" x1="0" y1="0" x2="0" y2="1"><stop offset="0" stop-color="#fffad8"/><stop offset="1" stop-color="#f9d259"/></linearGradient></defs>
<path d="M2.2 14.1H13.8Q15.5 14.1 15.5 12.6V5.4" fill="none" stroke="#7a6030" stroke-width="1" opacity="0.45"/>
<path d="M0.9 3.5Q0.9 2 2.3 2H5.5Q6.5 2 7.1 2.8L7.7 3.7H13.3Q14.7 3.7 14.7 5.1V12.2Q14.7 13.4 13.5 13.4H2.1Q0.9 13.4 0.9 12.2Z" fill="url(#fy2)" stroke="#cc9510" stroke-width="1.25"/>
<path d="M2 5.4H13.6" stroke="#fffdf0" stroke-width="1.1"/>
<path d="M10.6 6V12.6" stroke="#e8b838" stroke-width="1" opacity="0.6"/></svg>
<span class="t " style="left:434.45px;top:500.84px;font-size:12px;line-height:16px;color:#000;transform:scaleX(1.0196);">Quantum</span>
<div style="left:451px;top:554px;width:303px;height:18px;background:#0078d7;"></div>
<div style="left:390px;top:499px;width:381px;height:107px;overflow:hidden">
<span class="t" style="left:63.00px;top:19.84px;font-size:12px;line-height:16px;color:#000;"><b style="width:18.90px;transform:scaleX(1.0121)">wf_</b><b style="width:64.10px;transform:scaleX(0.9907)">amplitudes_</b><b style="width:54.50px;transform:scaleX(1.0212)">quantum_</b><b style="width:39.00px;transform:scaleX(0.9743)">region_</b><b style="width:46.80px;transform:scaleX(0.9484)">Gamma_</b><b style="width:25.20px;transform:scaleX(0.9441)">0000</b><b style="width:23.60px;transform:scaleX(0.8845)">_real</b><b style="width:18.00px;transform:scaleX(0.8994)">.dat</b></span>
<span class="t" style="left:63.00px;top:37.84px;font-size:12px;line-height:16px;color:#000;"><b style="width:18.90px;transform:scaleX(1.0121)">wf_</b><b style="width:64.10px;transform:scaleX(0.9907)">amplitudes_</b><b style="width:27.20px;transform:scaleX(0.9484)">shift_</b><b style="width:54.50px;transform:scaleX(1.0212)">quantum_</b><b style="width:39.00px;transform:scaleX(0.9743)">region_</b><b style="width:46.80px;transform:scaleX(0.9484)">Gamma_</b><b style="width:25.20px;transform:scaleX(0.9441)">0000</b><b style="width:23.60px;transform:scaleX(0.8845)">_real</b><b style="width:18.00px;transform:scaleX(0.8994)">.dat</b></span>
<span class="t" style="left:63.00px;top:55.84px;font-size:12px;line-height:16px;color:#fff;"><b style="width:18.90px;transform:scaleX(1.0121)">wf_</b><b style="width:40.10px;transform:scaleX(0.9248)">energy_</b><b style="width:55.10px;transform:scaleX(0.9836)">spectrum_</b><b style="width:54.50px;transform:scaleX(1.0212)">quantum_</b><b style="width:39.00px;transform:scaleX(0.9743)">region_</b><b style="width:46.80px;transform:scaleX(0.9484)">Gamma_</b><b style="width:25.20px;transform:scaleX(0.9441)">0000</b><b style="width:18.00px;transform:scaleX(0.8994)">.dat</b></span>
<span class="t" style="left:63.00px;top:73.84px;font-size:12px;line-height:16px;color:#000;"><b style="width:18.90px;transform:scaleX(1.0121)">wf_</b><b style="width:65.10px;transform:scaleX(1.0060)">occupation_</b><b style="width:54.50px;transform:scaleX(1.0212)">quantum_</b><b style="width:39.00px;transform:scaleX(0.9743)">region_</b><b style="width:41.60px;transform:scaleX(0.9749)">Gamma</b><b style="width:18.00px;transform:scaleX(0.8994)">.dat</b></span>
<span class="t" style="left:63.00px;top:91.84px;font-size:12px;line-height:16px;color:#000;"><b style="width:18.90px;transform:scaleX(1.0121)">wf_</b><b style="width:69.60px;transform:scaleX(0.9844)">probabilities_</b><b style="width:54.50px;transform:scaleX(1.0212)">quantum_</b><b style="width:39.00px;transform:scaleX(0.9743)">region_</b><b style="width:46.80px;transform:scaleX(0.9484)">Gamma_</b><b style="width:25.20px;transform:scaleX(0.9441)">0000</b><b style="width:18.00px;transform:scaleX(0.8994)">.dat</b></span>
</div>
<svg style="left:432px;top:520px;" width="16" height="15" viewBox="0 0 16 15"><rect x="0" y="0" width="16" height="15" fill="#000"/><rect x="2" y="2" width="12" height="11" fill="#d6f5d6"/><rect x="2.2" y="0.9" width="1.3" height="1.3" fill="#fff"/><rect x="2.2" y="12.8" width="1.3" height="1.3" fill="#fff"/><rect x="4.8" y="0.9" width="1.3" height="1.3" fill="#fff"/><rect x="4.8" y="12.8" width="1.3" height="1.3" fill="#fff"/><rect x="7.4" y="0.9" width="1.3" height="1.3" fill="#fff"/><rect x="7.4" y="12.8" width="1.3" height="1.3" fill="#fff"/><rect x="10.0" y="0.9" width="1.3" height="1.3" fill="#fff"/><rect x="10.0" y="12.8" width="1.3" height="1.3" fill="#fff"/><rect x="12.6" y="0.9" width="1.3" height="1.3" fill="#fff"/><rect x="12.6" y="12.8" width="1.3" height="1.3" fill="#fff"/><rect x="0.9" y="3.0" width="1.2" height="1.3" fill="#fff"/><rect x="13.9" y="3.0" width="1.2" height="1.3" fill="#fff"/><rect x="0.9" y="5.6" width="1.2" height="1.3" fill="#fff"/><rect x="13.9" y="5.6" width="1.2" height="1.3" fill="#fff"/><rect x="0.9" y="8.2" width="1.2" height="1.3" fill="#fff"/><rect x="13.9" y="8.2" width="1.2" height="1.3" fill="#fff"/><rect x="0.9" y="10.8" width="1.2" height="1.3" fill="#fff"/><rect x="13.9" y="10.8" width="1.2" height="1.3" fill="#fff"/><path d="M1.5 8.8H4.2C6 8.8 6 3.4 8 3.4C10 3.4 10 8.8 11.6 8.8H14.5" fill="none" stroke="#ff1010" stroke-width="1.1"/><path d="M1.5 6.2H5.5C7.4 6.2 7.8 11 9.6 11H14.5" fill="none" stroke="#1030ff" stroke-width="1.1"/></svg>
<svg style="left:432px;top:538px;" width="16" height="15" viewBox="0 0 16 15"><rect x="0" y="0" width="16" height="15" fill="#000"/><rect x="2" y="2" width="12" height="11" fill="#d6f5d6"/><rect x="2.2" y="0.9" width="1.3" height="1.3" fill="#fff"/><rect x="2.2" y="12.8" width="1.3" height="1.3" fill="#fff"/><rect x="4.8" y="0.9" width="1.3" height="1.3" fill="#fff"/><rect x="4.8" y="12.8" width="1.3" height="1.3" fill="#fff"/><rect x="7.4" y="0.9" width="1.3" height="1.3" fill="#fff"/><rect x="7.4" y="12.8" width="1.3" height="1.3" fill="#fff"/><rect x="10.0" y="0.9" width="1.3" height="1.3" fill="#fff"/><rect x="10.0" y="12.8" width="1.3" height="1.3" fill="#fff"/><rect x="12.6" y="0.9" width="1.3" height="1.3" fill="#fff"/><rect x="12.6" y="12.8" width="1.3" height="1.3" fill="#fff"/><rect x="0.9" y="3.0" width="1.2" height="1.3" fill="#fff"/><rect x="13.9" y="3.0" width="1.2" height="1.3" fill="#fff"/><rect x="0.9" y="5.6" width="1.2" height="1.3" fill="#fff"/><rect x="13.9" y="5.6" width="1.2" height="1.3" fill="#fff"/><rect x="0.9" y="8.2" width="1.2" height="1.3" fill="#fff"/><rect x="13.9" y="8.2" width="1.2" height="1.3" fill="#fff"/><rect x="0.9" y="10.8" width="1.2" height="1.3" fill="#fff"/><rect x="13.9" y="10.8" width="1.2" height="1.3" fill="#fff"/><path d="M1.5 8.8H4.2C6 8.8 6 3.4 8 3.4C10 3.4 10 8.8 11.6 8.8H14.5" fill="none" stroke="#ff1010" stroke-width="1.1"/><path d="M1.5 6.2H5.5C7.4 6.2 7.8 11 9.6 11H14.5" fill="none" stroke="#1030ff" stroke-width="1.1"/></svg>
<svg style="left:432px;top:556px;" width="16" height="15" viewBox="0 0 16 15"><rect x="0" y="0" width="16" height="15" fill="#000"/><rect x="2" y="2" width="12" height="11" fill="#d6f5d6"/><rect x="2.2" y="0.9" width="1.3" height="1.3" fill="#fff"/><rect x="2.2" y="12.8" width="1.3" height="1.3" fill="#fff"/><rect x="4.8" y="0.9" width="1.3" height="1.3" fill="#fff"/><rect x="4.8" y="12.8" width="1.3" height="1.3" fill="#fff"/><rect x="7.4" y="0.9" width="1.3" height="1.3" fill="#fff"/><rect x="7.4" y="12.8" width="1.3" height="1.3" fill="#fff"/><rect x="10.0" y="0.9" width="1.3" height="1.3" fill="#fff"/><rect x="10.0" y="12.8" width="1.3" height="1.3" fill="#fff"/><rect x="12.6" y="0.9" width="1.3" height="1.3" fill="#fff"/><rect x="12.6" y="12.8" width="1.3" height="1.3" fill="#fff"/><rect x="0.9" y="3.0" width="1.2" height="1.3" fill="#fff"/><rect x="13.9" y="3.0" width="1.2" height="1.3" fill="#fff"/><rect x="0.9" y="5.6" width="1.2" height="1.3" fill="#fff"/><rect x="13.9" y="5.6" width="1.2" height="1.3" fill="#fff"/><rect x="0.9" y="8.2" width="1.2" height="1.3" fill="#fff"/><rect x="13.9" y="8.2" width="1.2" height="1.3" fill="#fff"/><rect x="0.9" y="10.8" width="1.2" height="1.3" fill="#fff"/><rect x="13.9" y="10.8" width="1.2" height="1.3" fill="#fff"/><path d="M1.5 8.8H4.2C6 8.8 6 3.4 8 3.4C10 3.4 10 8.8 11.6 8.8H14.5" fill="none" stroke="#ff1010" stroke-width="1.1"/><path d="M1.5 6.2H5.5C7.4 6.2 7.8 11 9.6 11H14.5" fill="none" stroke="#1030ff" stroke-width="1.1"/></svg>
<svg style="left:432px;top:574px;" width="16" height="15" viewBox="0 0 16 15"><rect x="0" y="0" width="16" height="15" fill="#000"/><rect x="2" y="2" width="12" height="11" fill="#d6f5d6"/><rect x="2.2" y="0.9" width="1.3" height="1.3" fill="#fff"/><rect x="2.2" y="12.8" width="1.3" height="1.3" fill="#fff"/><rect x="4.8" y="0.9" width="1.3" height="1.3" fill="#fff"/><rect x="4.8" y="12.8" width="1.3" height="1.3" fill="#fff"/><rect x="7.4" y="0.9" width="1.3" height="1.3" fill="#fff"/><rect x="7.4" y="12.8" width="1.3" height="1.3" fill="#fff"/><rect x="10.0" y="0.9" width="1.3" height="1.3" fill="#fff"/><rect x="10.0" y="12.8" width="1.3" height="1.3" fill="#fff"/><rect x="12.6" y="0.9" width="1.3" height="1.3" fill="#fff"/><rect x="12.6" y="12.8" width="1.3" height="1.3" fill="#fff"/><rect x="0.9" y="3.0" width="1.2" height="1.3" fill="#fff"/><rect x="13.9" y="3.0" width="1.2" height="1.3" fill="#fff"/><rect x="0.9" y="5.6" width="1.2" height="1.3" fill="#fff"/><rect x="13.9" y="5.6" width="1.2" height="1.3" fill="#fff"/><rect x="0.9" y="8.2" width="1.2" height="1.3" fill="#fff"/><rect x="13.9" y="8.2" width="1.2" height="1.3" fill="#fff"/><rect x="0.9" y="10.8" width="1.2" height="1.3" fill="#fff"/><rect x="13.9" y="10.8" width="1.2" height="1.3" fill="#fff"/><path d="M1.5 8.8H4.2C6 8.8 6 3.4 8 3.4C10 3.4 10 8.8 11.6 8.8H14.5" fill="none" stroke="#ff1010" stroke-width="1.1"/><path d="M1.5 6.2H5.5C7.4 6.2 7.8 11 9.6 11H14.5" fill="none" stroke="#1030ff" stroke-width="1.1"/></svg>
<svg style="left:432px;top:592px;" width="16" height="15" viewBox="0 0 16 15"><rect x="0" y="0" width="16" height="15" fill="#000"/><rect x="2" y="2" width="12" height="11" fill="#d6f5d6"/><rect x="2.2" y="0.9" width="1.3" height="1.3" fill="#fff"/><rect x="2.2" y="12.8" width="1.3" height="1.3" fill="#fff"/><rect x="4.8" y="0.9" width="1.3" height="1.3" fill="#fff"/><rect x="4.8" y="12.8" width="1.3" height="1.3" fill="#fff"/><rect x="7.4" y="0.9" width="1.3" height="1.3" fill="#fff"/><rect x="7.4" y="12.8" width="1.3" height="1.3" fill="#fff"/><rect x="10.0" y="0.9" width="1.3" height="1.3" fill="#fff"/><rect x="10.0" y="12.8" width="1.3" height="1.3" fill="#fff"/><rect x="12.6" y="0.9" width="1.3" height="1.3" fill="#fff"/><rect x="12.6" y="12.8" width="1.3" height="1.3" fill="#fff"/><rect x="0.9" y="3.0" width="1.2" height="1.3" fill="#fff"/><rect x="13.9" y="3.0" width="1.2" height="1.3" fill="#fff"/><rect x="0.9" y="5.6" width="1.2" height="1.3" fill="#fff"/><rect x="13.9" y="5.6" width="1.2" height="1.3" fill="#fff"/><rect x="0.9" y="8.2" width="1.2" height="1.3" fill="#fff"/><rect x="13.9" y="8.2" width="1.2" height="1.3" fill="#fff"/><rect x="0.9" y="10.8" width="1.2" height="1.3" fill="#fff"/><rect x="13.9" y="10.8" width="1.2" height="1.3" fill="#fff"/><path d="M1.5 8.8H4.2C6 8.8 6 3.4 8 3.4C10 3.4 10 8.8 11.6 8.8H14.5" fill="none" stroke="#ff1010" stroke-width="1.1"/><path d="M1.5 6.2H5.5C7.4 6.2 7.8 11 9.6 11H14.5" fill="none" stroke="#1030ff" stroke-width="1.1"/></svg>
<div style="left:770px;top:499px;width:17px;height:107px;background:#f0f0f0;"></div>
<div style="left:771px;top:517px;width:15px;height:24px;background:#cdcdcd;"></div>
<svg style="left:774px;top:505px;" width="9" height="6" viewBox="0 0 9 6"><path d="M1 5L4.5 1.5L8 5" fill="none" stroke="#505050" stroke-width="1.6"/></svg>
<svg style="left:774px;top:594px;" width="9" height="6" viewBox="0 0 9 6"><path d="M1 1L4.5 4.5L8 1" fill="none" stroke="#505050" stroke-width="1.6"/></svg>
<div style="left:390px;top:606px;width:380px;height:17px;background:#f0f0f0;"></div>
<div style="left:408px;top:607px;width:342px;height:15px;background:#cdcdcd;"></div>
<svg style="left:396px;top:610px;" width="6" height="9" viewBox="0 0 6 9"><path d="M5 1L1.5 4.5L5 8" fill="none" stroke="#505050" stroke-width="1.6"/></svg>
<svg style="left:758px;top:610px;" width="6" height="9" viewBox="0 0 6 9"><path d="M1 1L4.5 4.5L1 8" fill="none" stroke="#505050" stroke-width="1.6"/></svg>
<div style="left:770px;top:606px;width:18px;height:17px;background:#f0f0f0;"></div>
<div style="left:794px;top:448px;width:91px;height:24px;background:#f0f0f0;border:1px solid #8f8f8f;box-sizing:border-box;"></div>
<span class="t " style="left:818.43px;top:452.84px;font-size:12px;line-height:16px;color:#000;transform:scaleX(0.9515);">Check</span>
<div style="left:889px;top:448px;width:71px;height:24px;background:#f0f0f0;border:1px solid #8f8f8f;box-sizing:border-box;"></div>
<span class="t " style="left:896.70px;top:452.84px;font-size:12px;line-height:16px;color:#000;transform:scaleX(0.9297);">Select</span>
<div style="left:794px;top:473px;width:91px;height:24px;background:#f0f0f0;border:1px solid #8f8f8f;box-sizing:border-box;"></div>
<span class="t " style="left:818.32px;top:477.84px;font-size:12px;line-height:16px;color:#000;transform:scaleX(0.9786);">Uncheck</span>
<div style="left:889px;top:473px;width:71px;height:24px;background:#f0f0f0;border:1px solid #8f8f8f;box-sizing:border-box;"></div>
<span class="t " style="left:896.89px;top:477.84px;font-size:12px;line-height:16px;color:#000;transform:scaleX(0.9461);">Deselect</span>
<svg style="left:798px;top:450px;" width="20" height="46" viewBox="798 450 20 46"><defs><linearGradient id="gk" gradientUnits="userSpaceOnUse" x1="800" y1="0" x2="816" y2="0"><stop offset="0" stop-color="#0a58ff"/><stop offset="0.55" stop-color="#10a8f8"/><stop offset="1" stop-color="#00e6f4"/></linearGradient></defs>
<path d="M799.6 456.6L802.6 454.8C804.8 457.2 806.6 460 807.7 462.6C809.8 458.8 812.4 455.8 816 453.4C812.8 457.4 810 462 808 466.8L806.8 466.8C805.2 462.8 802.8 459.4 799.6 456.6Z" fill="url(#gk)"/>
<path d="M800.2 481.8C800.4 480.2 802.2 479.6 803.6 480.6C807.6 483.8 811.2 487.8 814 492.6C810 488.6 805.6 485 800.2 481.8Z" fill="url(#gk)"/>
<path d="M815.8 479.2C809.8 482.6 805.6 487.4 804 492.2C803.4 494 800.6 493.6 801 491.4C802.4 486.2 808 481.4 815.8 479.2Z" fill="url(#gk)"/></svg>
<div style="left:794px;top:498px;width:170px;height:126px;background:#fff;border:1px solid #828790;box-sizing:border-box;"></div>
<div style="left:800px;top:503px;width:13px;height:13px;background:#fff;border:1px solid #333;box-sizing:border-box;"></div>
<svg style="left:800px;top:503px;" width="13" height="13" viewBox="0 0 13 13"><path d="M2.8 6.6L5.3 9.2L10.3 3.6" fill="none" stroke="#111" stroke-width="1.15"/></svg>
<span class="t " style="left:818.53px;top:501.84px;font-size:12px;line-height:16px;color:#ff0000;transform:scaleX(0.9743);">energy[eV]</span>
</body></html>
